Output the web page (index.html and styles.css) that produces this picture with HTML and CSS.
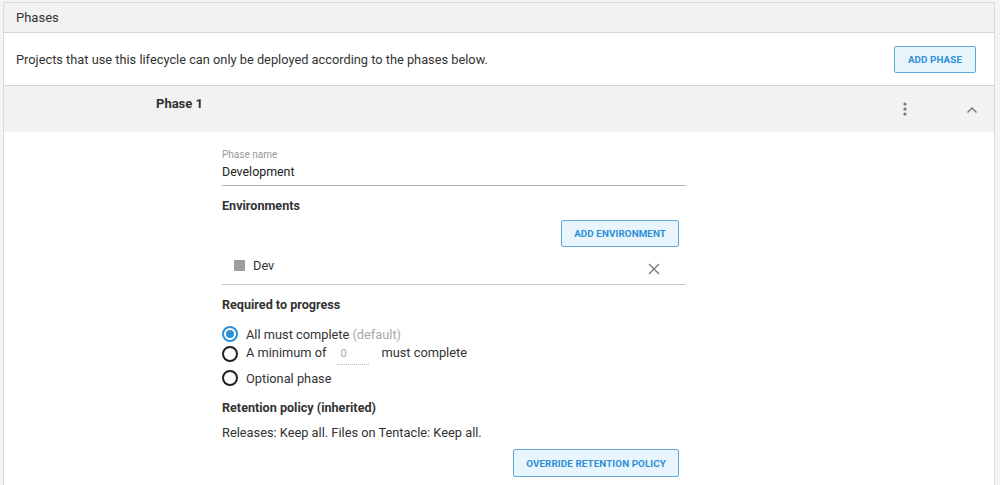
FILE: index.html
```html
<!DOCTYPE html>
<html>
<head>
<meta charset="utf-8">
<link rel="stylesheet" href="styles.css">
</head>
<body>
<div class="card">
  <div class="section-head">Phases</div>
  <div class="desc-row">
    <span>Projects that use this lifecycle can only be deployed according to the phases below.</span>
    <button class="btn">ADD PHASE</button>
  </div>
  <div class="phase-head">
    <span class="phase-title">Phase 1</span>
    <div class="phase-actions">
      <svg class="kebab" width="4" height="14" viewBox="0 0 4 14"><circle cx="2" cy="2" r="1.6" fill="#757575"/><circle cx="2" cy="7" r="1.6" fill="#757575"/><circle cx="2" cy="12" r="1.6" fill="#757575"/></svg>
      <svg class="chev" width="12" height="8" viewBox="0 0 12 8"><path d="M1.5 6.5 L6 2 L10.5 6.5" fill="none" stroke="#757575" stroke-width="1.4"/></svg>
    </div>
  </div>
  <div class="phase-body">
    <div class="form">
      <div class="field">
        <div class="field-label">Phase name</div>
        <div class="field-value">Development</div>
      </div>
      <div class="sub-title env-title">Environments</div>
      <div class="right-row"><button class="btn">ADD ENVIRONMENT</button></div>
      <div class="env-row">
        <span class="env-sq"></span>
        <span class="env-name">Dev</span>
        <svg class="close" width="12" height="12" viewBox="0 0 12 12"><path d="M1 1 L11 11 M11 1 L1 11" stroke="#777" stroke-width="1.4"/></svg>
      </div>
      <div class="sub-title req-title">Required to progress</div>
      <div class="radios">
        <div class="radio-row r1"><span class="radio on"></span><span>All must complete <span class="muted">(default)</span></span></div>
        <div class="radio-row r2"><span class="radio"></span><span>A minimum of</span><span class="num">0</span><span>must complete</span></div>
        <div class="radio-row r3"><span class="radio"></span><span>Optional phase</span></div>
      </div>
      <div class="sub-title ret-title">Retention policy (inherited)</div>
      <div class="ret-text">Releases: Keep all. Files on Tentacle: Keep all.</div>
      <div class="right-row ret-btn"><button class="btn">OVERRIDE RETENTION POLICY</button></div>
    </div>
  </div>
</div>
</body>
</html>
```

FILE: styles.css
```css
* { box-sizing: border-box; }
html, body { margin: 0; padding: 0; }
body {
  background: #f4f4f4;
  font-family: Roboto, "Noto Sans", sans-serif;
  font-size: 12.8px;
  color: #333;
  height: 485px;
  overflow: hidden;
}
.card {
  margin: 2px 5px 0 3px;
  background: #fff;
  border: 1px solid #dcdcdc;
  border-bottom: none;
  height: 490px;
}
.section-head {
  height: 30px;
  background: #f2f2f2;
  border-bottom: 1px solid #d6d6d6;
  padding-left: 12px;
  line-height: 30px;
  font-size: 13px;
  color: #333;
}
.desc-row {
  height: 53px;
  display: flex;
  align-items: center;
  justify-content: space-between;
  padding: 0 18px 0 12px;
  border-bottom: 1px solid #d6d6d6;
}
.btn {
  font-family: Roboto, sans-serif;
  font-size: 9.8px;
  font-weight: 700;
  color: #2d8fd8;
  background: #e9f5fc;
  border: 1px solid #5fa9dd;
  border-radius: 2px;
  height: 27px;
  padding: 0 12px;
  letter-spacing: 0.1px;
}
.desc-row .btn { width: 82px; padding: 0; }
.phase-head {
  height: 46px;
  background: #f2f2f2;
  display: flex;
  justify-content: space-between;
  padding: 10px 0 0 152px;
}
.phase-title {
  font-weight: 700;
  font-size: 13px;
  color: #333;
  line-height: 16px;
}
.phase-actions {
  display: flex;
  align-items: center;
  height: 26px;
  padding-right: 16px;
}
.kebab { margin-right: 59px; }
.chev { margin-top: 1px; }
.phase-body {
  padding: 17px 0 0 218px;
}
.form { width: 464px; }
.field { border-bottom: 1px solid #b5b5b5; height: 37px; }
.field-label { font-size: 10px; color: #999; line-height: 12px; }
.field-value { font-size: 12.4px; line-height: 16px; margin-top: 3px; color: #222; }
.sub-title { font-weight: 700; font-size: 12.6px; line-height: 16px; }
.env-title { margin-top: 12px; }
.right-row { display: flex; justify-content: flex-end; padding-right: 7px; }
.right-row .btn { height: 27px; }
.right-row:not(.ret-btn) { margin-top: 6px; }
.env-row {
  height: 38px;
  border-bottom: 1px solid #c8c8c8;
  display: flex;
  align-items: center;
  padding: 0 26px 0 12px;
}
.env-sq { width: 11px; height: 11px; background: #9e9e9e; border-radius: 1px; margin-right: 8px; margin-top: -1px; }
.env-name { flex: 1; margin-top: -1px; }
.close { margin-top: 6px; }
.req-title { margin-top: 12px; }
.radios { margin-top: 12px; }
.radio-row { display: flex; align-items: center; height: 18px; }
.r3 { margin-top: 8px; }
.radio {
  width: 16px; height: 16px;
  border: 2px solid #222;
  border-radius: 50%;
  margin-right: 8px;
  position: relative;
  flex: none;
}
.radio.on { border-color: #2d8fd8; }
.radio.on::after {
  content: "";
  position: absolute;
  left: 2px; top: 2px;
  width: 8px; height: 8px;
  border-radius: 50%;
  background: #2d8fd8;
}
.muted { color: #a8a8a8; }
.num {
  width: 32px;
  margin: 4px 12px 0 11px;
  padding-left: 3px;
  color: #aaa;
  font-size: 11px;
  border-bottom: 1px dotted #bbb;
  line-height: 14px;
  padding-top: 4px;
  height: 22px;
}
.r2 .radio { margin-top: 4px; }
.ret-title { margin-top: 13px; }
.ret-text { margin-top: 9px; line-height: 16px; }
.ret-btn { margin-top: 8px; }
.ret-btn .btn { height: 28px; }
```
